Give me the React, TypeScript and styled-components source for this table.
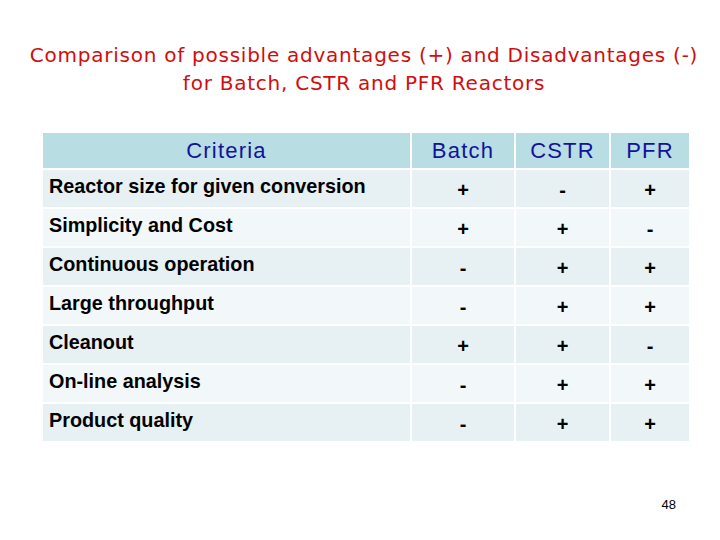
import styled, { createGlobalStyle } from "styled-components";

const GlobalStyle = createGlobalStyle`
  html, body {
    margin: 0;
    padding: 0;
    background: #ffffff;
  }
`;

const Slide = styled.div`
  width: 720px;
  height: 540px;
  display: flex;
  flex-direction: column;
  background: #ffffff;
  overflow: hidden;
`;

const Title = styled.h1`
  margin: 41px 0 0;
  padding-left: 8px;
  font-family: "DejaVu Sans", "Comic Sans MS", sans-serif;
  font-weight: 400;
  font-size: 20px;
  letter-spacing: 0.75px;
  line-height: 28px;
  color: #d10d0d;
  text-align: center;
`;

const Table = styled.div`
  margin: 36px 0 0 43px;
  width: 646px;
  display: grid;
  grid-template-columns: 367px 102px 93px 78px;
  grid-auto-rows: 37px;
  grid-template-rows: 35px;
  gap: 2px;
  background: #ffffff;
`;

const HeadCell = styled.div`
  background: #b8dde2;
  display: flex;
  align-items: center;
  justify-content: center;
  font-family: "Liberation Sans", Arial, sans-serif;
  font-size: 22px;
  letter-spacing: 1.2px;
  color: #12129c;
`;

const Label = styled.div<{ $odd: boolean }>`
  background: ${p => (p.$odd ? "#e7f0f3" : "#f2f8fa")};
  padding: 5px 0 0 6px;
  font-family: "Liberation Sans", Arial, sans-serif;
  font-weight: 700;
  font-size: 19.8px;
  color: #000000;
`;

const Mark = styled.div<{ $odd: boolean }>`
  background: ${p => (p.$odd ? "#e7f0f3" : "#f2f8fa")};
  display: flex;
  align-items: center;
  justify-content: center;
  padding-top: 3px;
  font-family: "Liberation Sans", Arial, sans-serif;
  font-weight: 700;
  font-size: 20px;
  color: #000000;
`;

const Footer = styled.div`
  margin-top: auto;
  display: flex;
  justify-content: flex-end;
  padding: 0 44px 28px 0;
  font-family: "Liberation Sans", Arial, sans-serif;
  font-size: 13px;
  color: #000000;
`;

const rows: [string, string, string, string][] = [
  ["Reactor size for given conversion", "+", "-", "+"],
  ["Simplicity and Cost", "+", "+", "-"],
  ["Continuous operation", "-", "+", "+"],
  ["Large throughput", "-", "+", "+"],
  ["Cleanout", "+", "+", "-"],
  ["On-line analysis", "-", "+", "+"],
  ["Product quality", "-", "+", "+"],
];

export default function App() {
  return (
    <Slide>
      <GlobalStyle />
      <Title>
        Comparison of possible advantages (+) and Disadvantages (-)
        <br />
        for Batch, CSTR and PFR Reactors
      </Title>
      <Table>
        <HeadCell>Criteria</HeadCell>
        <HeadCell>Batch</HeadCell>
        <HeadCell>CSTR</HeadCell>
        <HeadCell>PFR</HeadCell>
        {rows.map(([label, b, c, p], i) => {
          const odd = i % 2 === 0;
          return [
            <Label key={label} $odd={odd}>{label}</Label>,
            <Mark key={label + "b"} $odd={odd}>{b}</Mark>,
            <Mark key={label + "c"} $odd={odd}>{c}</Mark>,
            <Mark key={label + "p"} $odd={odd}>{p}</Mark>,
          ];
        })}
      </Table>
      <Footer>48</Footer>
    </Slide>
  );
}
